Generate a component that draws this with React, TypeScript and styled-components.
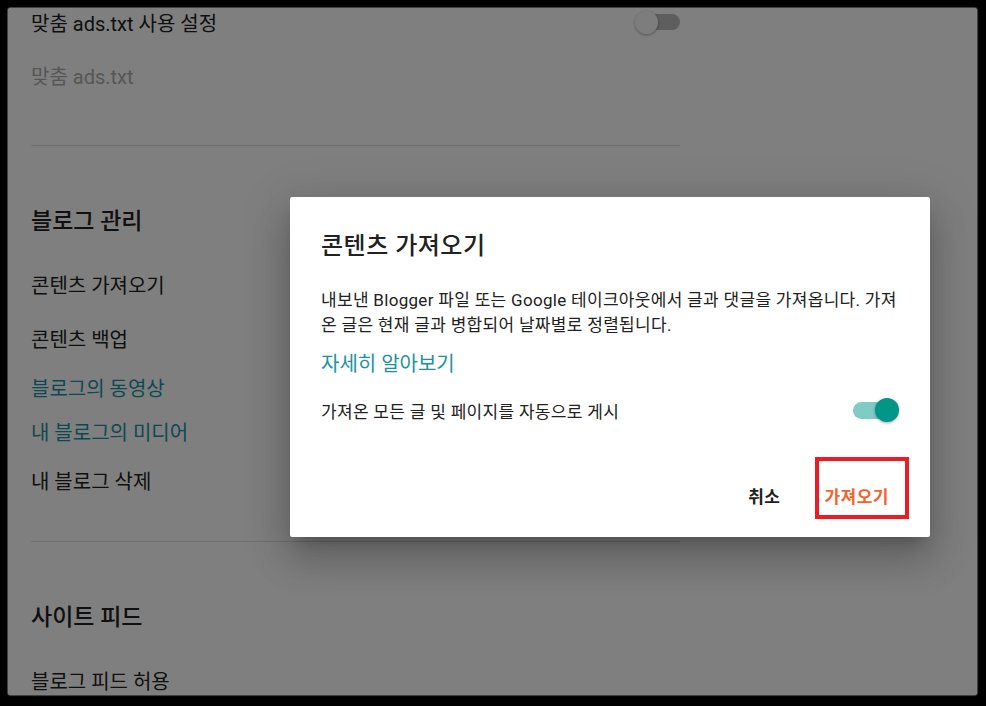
import React from 'react';
import styled, { createGlobalStyle } from 'styled-components';

const GlobalStyle = createGlobalStyle`
  html, body {
    margin: 0;
    padding: 0;
    background: #000;
  }
  body {
    font-family: Roboto, "Noto Sans CJK KR", "Noto Sans", sans-serif;
    color: #212121;
  }
`;

type GapProps = { $gap: number };

const Screen = styled.div`
  width: 986px;
  height: 706px;
  padding: 8px 9px 11px 8px;
  box-sizing: border-box;
  background: #000;
`;

const Frame = styled.div`
  position: relative;
  width: 100%;
  height: 100%;
  overflow: hidden;
  border-radius: 3px;
  background: #fff;
  box-shadow: 0 0 1px 1px rgba(90, 90, 90, 0.8);
`;

const Page = styled.div`
  display: flex;
  flex-direction: column;
  width: 649px;
  padding-left: 23px;
`;

const SettingRow = styled.div`
  display: flex;
  align-items: center;
  justify-content: space-between;
  height: 28px;
  font-size: 20px;
`;

const Placeholder = styled.div<GapProps>`
  margin-top: ${(p) => p.$gap}px;
  height: 28px;
  line-height: 28px;
  font-size: 20px;
  color: #acacac;
`;

const Divider = styled.div<GapProps>`
  margin-top: ${(p) => p.$gap}px;
  height: 1px;
  background: #dedede;
`;

const SectionTitle = styled.div<GapProps>`
  margin-top: ${(p) => p.$gap}px;
  height: 30px;
  line-height: 30px;
  font-size: 23px;
  font-weight: 500;
`;

const Item = styled.div<GapProps & { $link?: boolean }>`
  margin-top: ${(p) => p.$gap}px;
  height: 28px;
  line-height: 28px;
  font-size: 20px;
  color: ${(p) => (p.$link ? '#1a939e' : '#212121')};
`;

const Switch = styled.div<{ $on?: boolean }>`
  position: relative;
  display: flex;
  align-items: center;
  justify-content: flex-end;
  width: ${(p) => (p.$on ? 46 : 45)}px;
  height: 24px;
`;

const Track = styled.div<{ $on?: boolean }>`
  width: ${(p) => (p.$on ? 38 : 34)}px;
  height: ${(p) => (p.$on ? 17 : 16)}px;
  margin-right: ${(p) => (p.$on ? 8 : 0)}px;
  border-radius: 9px;
  background: ${(p) => (p.$on ? '#80cbc4' : '#bdbdbd')};
`;

const Thumb = styled.div<{ $on?: boolean }>`
  position: absolute;
  top: ${(p) => (p.$on ? 0 : 1)}px;
  ${(p) => (p.$on ? 'right: 0;' : 'left: 0;')}
  width: ${(p) => (p.$on ? 24 : 23)}px;
  height: ${(p) => (p.$on ? 24 : 23)}px;
  border-radius: 50%;
  background: ${(p) => (p.$on ? '#009688' : '#fafafa')};
  box-shadow: 0 1px 3px rgba(0, 0, 0, 0.35);
`;

const Scrim = styled.div`
  position: absolute;
  inset: 0;
  background: rgba(0, 0, 0, 0.5);
`;

const Dialog = styled.div`
  position: absolute;
  left: 282px;
  top: 189px;
  width: 640px;
  height: 340px;
  box-sizing: border-box;
  display: flex;
  flex-direction: column;
  background: #fff;
  border-radius: 2px;
  box-shadow: 0 24px 38px 3px rgba(0, 0, 0, 0.14), 0 9px 46px 8px rgba(0, 0, 0, 0.12),
    0 11px 15px -7px rgba(0, 0, 0, 0.2);
`;

const DialogBody = styled.div`
  display: flex;
  flex-direction: column;
  padding: 33px 31px 0 31px;
`;

const DialogTitle = styled.h2`
  margin: 0;
  height: 32px;
  line-height: 32px;
  font-size: 24px;
  font-weight: 500;
  letter-spacing: 0.5px;
  color: #212121;
`;

const Description = styled.p`
  margin: 26px 0 0;
  font-size: 17px;
  line-height: 25px;
  letter-spacing: 0.3px;
  white-space: nowrap;
  color: #212121;
`;

const LearnMore = styled.a`
  margin-top: 13px;
  height: 26px;
  line-height: 26px;
  font-size: 20px;
  color: #1a939e;
  text-decoration: none;
`;

const OptionRow = styled.div`
  margin-top: 20px;
  display: flex;
  align-items: center;
  justify-content: space-between;
  height: 26px;
  font-size: 17px;
  letter-spacing: 0.3px;
`;

const Actions = styled.div`
  position: relative;
  margin-top: auto;
  display: flex;
  justify-content: flex-end;
  gap: 12px;
  padding: 0 25px 24px;
`;

const TextButton = styled.button<{ $primary?: boolean }>`
  height: 36px;
  min-width: 64px;
  padding: 0 16px;
  border: none;
  background: transparent;
  font-family: inherit;
  font-size: 17px;
  font-weight: 700;
  letter-spacing: 0.5px;
  color: ${(p) => (p.$primary ? '#f4622f' : '#212121')};
  cursor: pointer;
`;

const Highlight = styled.div`
  position: absolute;
  right: 21px;
  top: -20px;
  width: 94px;
  height: 62px;
  box-sizing: border-box;
  border: 4px solid #ed1c24;
  pointer-events: none;
`;

const App = () => {
  return (
    <>
      <GlobalStyle />
      <Screen>
        <Frame>
          <Page>
            <SettingRow>
              <span>맞춤 ads.txt 사용 설정</span>
              <Switch>
                <Track />
                <Thumb />
              </Switch>
            </SettingRow>
            <Placeholder $gap={27}>맞춤 ads.txt</Placeholder>
            <Divider $gap={54} />

            <SectionTitle $gap={61}>블로그 관리</SectionTitle>
            <Item $gap={35}>콘텐츠 가져오기</Item>
            <Item $gap={26}>콘텐츠 백업</Item>
            <Item $gap={21} $link>
              블로그의 동영상
            </Item>
            <Item $gap={16} $link>
              내 블로그의 미디어
            </Item>
            <Item $gap={21}>내 블로그 삭제</Item>
            <Divider $gap={45} />

            <SectionTitle $gap={61}>사이트 피드</SectionTitle>
            <Item $gap={35}>블로그 피드 허용</Item>
          </Page>

          <Scrim />

          <Dialog>
            <DialogBody>
              <DialogTitle>콘텐츠 가져오기</DialogTitle>
              <Description>
                내보낸 Blogger 파일 또는 Google 테이크아웃에서 글과 댓글을 가져옵니다. 가져
                <br />온 글은 현재 글과 병합되어 날짜별로 정렬됩니다.
              </Description>
              <LearnMore href="#">자세히 알아보기</LearnMore>
              <OptionRow>
                <span>가져온 모든 글 및 페이지를 자동으로 게시</span>
                <Switch $on>
                  <Track $on />
                  <Thumb $on />
                </Switch>
              </OptionRow>
            </DialogBody>
            <Actions>
              <TextButton>취소</TextButton>
              <TextButton $primary>가져오기</TextButton>
              <Highlight />
            </Actions>
          </Dialog>
        </Frame>
      </Screen>
    </>
  );
};

export default App;
